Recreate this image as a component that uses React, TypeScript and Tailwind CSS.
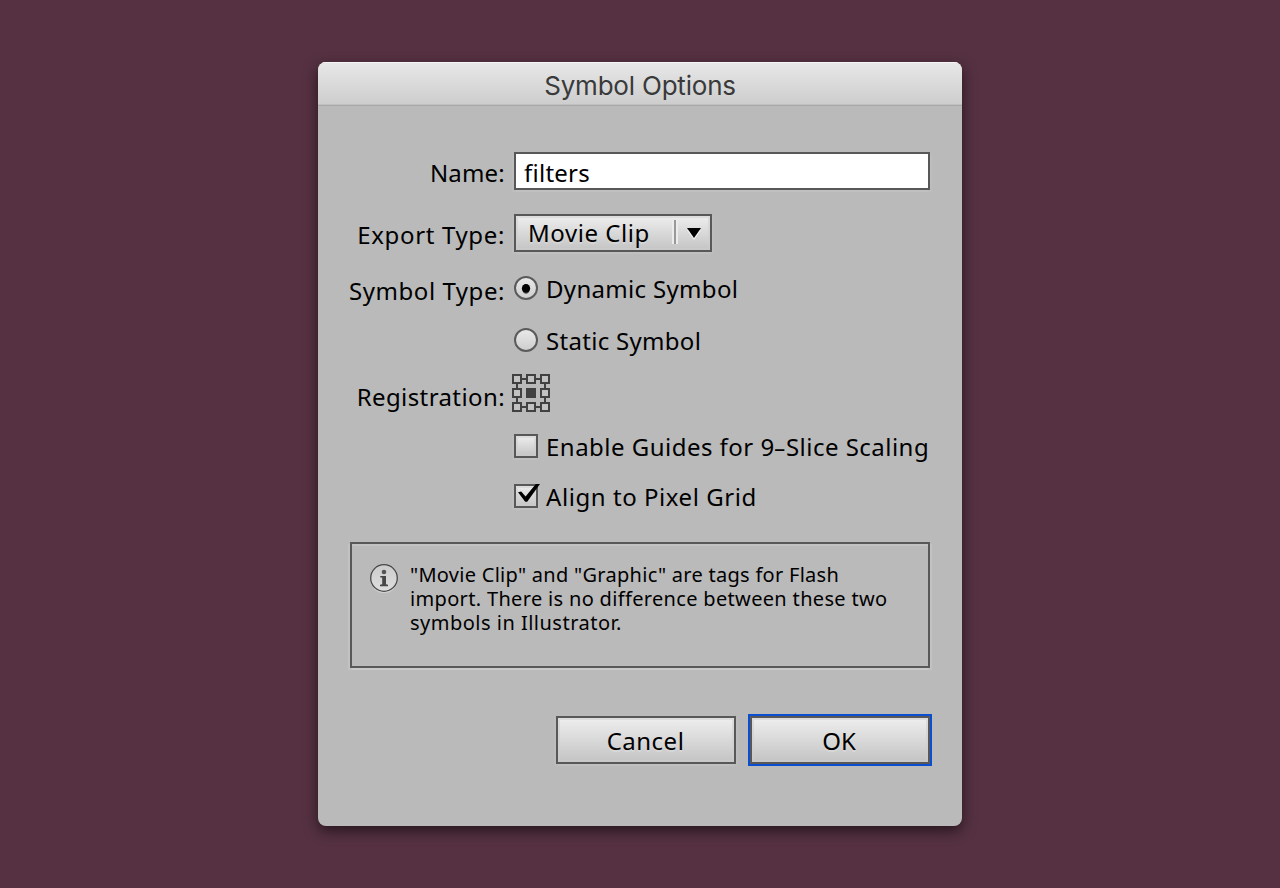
import { ReactNode } from 'react';

const edge = 'border-2 border-[#585858] shadow-[-2px_2px_0_rgba(255,255,255,0.05),2px_2px_0_rgba(255,255,255,0.05)]';
const bevel =
  'border-2 border-[#585858] bg-linear-to-b from-[#eeeeee] to-[#c4c4c4] shadow-[-2px_2px_0_rgba(255,255,255,0.05),2px_2px_0_rgba(255,255,255,0.05),inset_0_0_0_2px_rgba(205,205,205,0.5)]';
const glow = '[text-shadow:0_2px_0_rgba(255,255,255,0.2)]';

function Row({ label, className, labelClass = '', children }: { label?: string; className: string; labelClass?: string; children: ReactNode }) {
  return (
    <div className={`flex items-start gap-2 ${className}`}>
      <div className={`mr-px flex w-[157px] shrink-0 justify-end whitespace-nowrap ${labelClass}`}>{label}</div>
      {children}
    </div>
  );
}

function Radio({ checked }: { checked?: boolean }) {
  return (
    <svg className="size-6 shrink-0 overflow-visible" viewBox="0 0 24 24">
      <defs>
        <linearGradient id="radioFill" x1="0" y1="0" x2="0" y2="1">
          <stop offset="0" stopColor="#eaeaea" />
          <stop offset="1" stopColor="#cdcdcd" />
        </linearGradient>
      </defs>
      <circle cx="12" cy="12" r="11" fill="url(#radioFill)" stroke="#5b5b5b" strokeWidth="2" />
      {checked && (
        <>
          <ellipse cx="12" cy="13.3" rx="3.8" ry="4.7" fill="#666" />
          <ellipse cx="12" cy="12.3" rx="4.1" ry="4.4" fill="#000" />
        </>
      )}
    </svg>
  );
}

function Checkbox({ checked }: { checked?: boolean }) {
  return (
    <div className={`size-6 shrink-0 ${bevel}`}>
      {checked && (
        <svg className="-mt-0.5 -ml-0.5 h-6 w-7 max-w-none overflow-visible" viewBox="0 0 28 24">
          <path d="M4 8.3 L7.2 7.6 L11.6 12.6 L21.8 0 H26 L13.2 17.7 H11.2 Z" fill="#000" />
        </svg>
      )}
    </div>
  );
}

function Registration() {
  const cells = [0, 14, 28];
  return (
    <svg className="-ml-0.5 h-[38px] w-[38px]" viewBox="0 0 38 38">
      <path d="M5 5H33V33H5Z" fill="none" stroke="#414141" strokeWidth="2" />
      {cells.map((y) =>
        cells.map((x) => (
          <rect key={`${x}-${y}`} x={x + 1} y={y + 1} width="8" height="8" stroke="#414141" strokeWidth="2" fill={x === 14 && y === 14 ? '#414141' : '#c2c2c2'} />
        )),
      )}
    </svg>
  );
}

function InfoIcon() {
  return (
    <svg className="size-7 shrink-0 overflow-visible" viewBox="0 0 28 28">
      <defs>
        <linearGradient id="infoFill" x1="0" y1="0" x2="0" y2="1">
          <stop offset="0" stopColor="#cccccc" />
          <stop offset="1" stopColor="#dedede" />
        </linearGradient>
      </defs>
      <circle cx="14" cy="15.6" r="13.6" fill="#cfcfcf" />
      <circle cx="14" cy="14" r="13.3" fill="url(#infoFill)" stroke="#474747" strokeWidth="1.3" />
      <circle cx="14" cy="8" r="2.3" fill="#555" />
      <path d="M10.2 12H16V20.3L18 20.8V22.2H10V20.8L12.2 20.3V13.8L10.2 13.3Z" fill="#484848" />
    </svg>
  );
}

export default function App() {
  return (
    <div className="flex h-[888px] w-full justify-center bg-[#553142] pt-[62px] text-[24px] leading-8 text-black font-['Noto_Sans',sans-serif]">
      <div className="flex h-[764px] w-[644px] flex-col overflow-hidden rounded-lg bg-[#bababa] shadow-[0_5px_14px_rgba(0,0,0,0.55)]">
        <header className="flex h-11 shrink-0 items-start justify-center border-b border-[#a9a9a9] bg-linear-to-b from-[#e8e8e8] to-[#cdcdcd] pt-2 font-['Inter',sans-serif] text-[26px] tracking-[-0.2px] text-[#3a3a3a] shadow-[inset_0_1px_0_#f6f6f6,inset_0_-1px_0_#bfbfbf]">
          Symbol Options
        </header>

        <main className="flex flex-col pt-[46px] pr-8 pl-[30px]">
          <Row label="Name:" className="mb-6 h-[38px]" labelClass="pt-[5px] tracking-[0.2px]">
            <div className={`h-[38px] w-[416px] bg-white pt-[3px] pl-[8px] tracking-[0.25px] ${edge}`}>filters</div>
          </Row>

          <Row label="Export Type:" className="mb-6 h-[38px]" labelClass="pt-[5px] tracking-[0.65px]">
            <div className={`flex h-[38px] w-[198px] items-start ${bevel}`}>
              <span className={`w-[156px] pt-px pl-3 tracking-[0.55px] ${glow}`}>Movie Clip</span>
              <span className="mt-1 h-6 w-1.5 border-x-2 border-[#ececec] bg-[#999999]" />
              <svg className="mt-3 ml-[9px] h-3 w-[14px]" viewBox="0 0 14 12">
                <path d="M0 2H14L7 12Z" fill="#f4f4f4" />
                <path d="M0 0H14L7 10Z" fill="#000" />
              </svg>
            </div>
          </Row>

          <Row label="Symbol Type:" className="mb-7 h-6" labelClass="-mt-px tracking-[0.55px]">
            <Radio checked />
            <span className="-mt-[3px] tracking-[0.32px]">Dynamic Symbol</span>
          </Row>

          <Row className="mb-[22px] h-6">
            <Radio />
            <span className="-mt-[3px] tracking-[0.3px]">Static Symbol</span>
          </Row>

          <Row label="Registration:" className="mb-[22px] h-[38px]" labelClass="pt-[7px] tracking-[0.4px]">
            <Registration />
          </Row>

          <Row className="mb-[26px] h-6">
            <Checkbox />
            <span className="-mt-[3px] whitespace-nowrap tracking-[0.48px]">
              Enable Guides for 9<span className="mx-[1.5px] inline-block scale-x-[1.6]">-</span>Slice Scaling
            </span>
          </Row>

          <Row className="mb-[34px] h-6">
            <Checkbox checked />
            <span className="-mt-[3px] tracking-[0.56px]">Align to Pixel Grid</span>
          </Row>

          <section className="ml-0.5 flex h-[126px] gap-3 border-2 border-[#585858] pt-[18px] pl-[18px] text-[20px] leading-6 shadow-[-2px_2px_0_rgba(255,255,255,0.12),2px_2px_0_rgba(255,255,255,0.12),inset_0_2px_0_rgba(255,255,255,0.12)]">
            <div className="pt-0.5">
              <InfoIcon />
            </div>
            <p className="pt-px whitespace-nowrap">
              <span className="block tracking-[0.28px]">"Movie Clip" and "Graphic" are tags for Flash</span>
              <span className="block tracking-[0.33px]">import. There is no difference between these two</span>
              <span className="block tracking-[0.49px]">symbols in Illustrator.</span>
            </p>
          </section>

          <div className="mt-12 flex justify-end gap-[14px]">
            <button className={`flex h-12 w-[180px] items-start justify-center pt-[7px] pr-px tracking-[0.5px] ${bevel} ${glow}`}>Cancel</button>
            <button className="flex h-12 w-[180px] items-start justify-center border-2 border-[#585858] bg-linear-to-b from-[#eeeeee] to-[#c4c4c4] pt-[7px] pr-0.5 shadow-[0_0_0_2px_#0b4fd0,inset_0_0_0_2px_rgba(205,205,205,0.5)] [text-shadow:0_2px_0_rgba(255,255,255,0.2)]">
              OK
            </button>
          </div>
        </main>
      </div>
    </div>
  );
}
